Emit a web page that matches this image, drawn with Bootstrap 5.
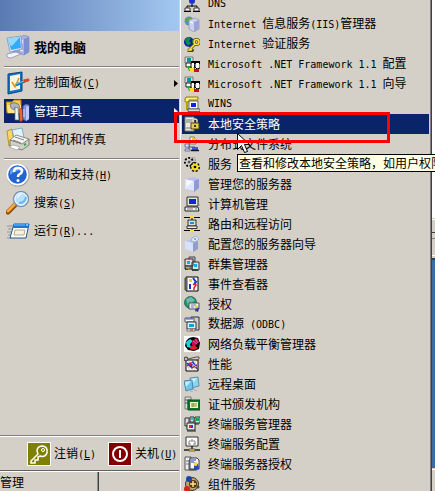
<!DOCTYPE html>
<html lang="zh-CN">
<head>
<meta charset="utf-8">
<meta name="viewport" content="width=device-width, initial-scale=1">
<title>开始菜单 - 管理工具</title>
<link href="https://cdn.jsdelivr.net/npm/bootstrap@5.3.0/dist/css/bootstrap.min.css" rel="stylesheet">
<style>
:root { --face: #d4d0c8; --navy: #0a246a; }
body { font: 12px/16px "Noto Sans CJK SC", sans-serif; color: #000; background: var(--face); }
a, a:hover { color: inherit; text-decoration: none; white-space: nowrap; }
.latin { font: 10px/16px "DejaVu Sans Mono", monospace; white-space: pre; }
svg { display: block; flex: none; }
.start-pane { flex: 0 0 179px; }
.start-banner { height: 31px; background: linear-gradient(90deg, #5a7ab4, #a3c8f0); }
.start-item { height: 24px; padding-left: 2px; gap: 4px; margin: 0 0 4px 4px; }
.start-item svg { width: 24px; height: 24px; }
.start-item .arrow { width: 4px; height: 7px; margin: 0 1px 0 auto; }
.start-item.my-pc { font-size: 13px; font-weight: 700; margin: 4px 0 7px 4px; }
.picked, .picked:hover { background: var(--navy); color: #fff; }
.groove { height: 2px; margin: 3px 0 3px 4px; background: linear-gradient(#808080 50%, #fff 50%); }
.groove.first, .groove.full { margin-top: 0; }
.groove.full { margin-left: 0; margin-bottom: 0; }
.start-foot { height: 33px; gap: 12px; padding-left: 27px; }
.foot-btn { gap: 3px; font-size: 12px; line-height: 16px; color: #000; white-space: nowrap; }
.foot-btn svg { width: 24px; height: 24px; }
.taskbar { height: 21px; border-top: 1px solid #606060; box-shadow: inset 0 1px #fff; }
.task { width: 99px; height: 20px; margin-top: 1px; font-size: 12px; line-height: 16px; color: #000; text-align: left; border-right: 1px solid #404040; box-shadow: inset -1px 0 #909090; }
.tools { border-left: 1px solid var(--face); border-right: 1px solid #404040; box-shadow: inset 1px 0 #fff, inset -1px 0 #808080; padding: 0 2px; background: var(--face); }
.tools-list { margin-top: -6px; }
.tool-item { height: 20px; padding-left: 2px; gap: 8px; }
.tool-item svg { width: 16px; height: 16px; }
.desk { flex: 0 0 3px; background: linear-gradient(#fff 218px, #d4d0c8 218px 219px, #fff 219px 220px, #d4d0c8 220px 232px, #404040 232px 233px, #d4d0c8 233px 238px, #808080 238px 239px, #d4d0c8 239px 255px, #fff 255px 256px, #d4d0c8 256px 258px, #404040 258px 260px, #3a6ea5 260px 468px, #d4d0c8 468px 469px, #fff 469px 470px, #d4d0c8 470px); }
.tip { left: 237px; top: 154px; height: 18px; right: -12px; padding: 0 1px; border: 1px solid #000; background: #ffffe1; white-space: nowrap; }
.frame { left: 174px; top: 112px; width: 216px; height: 31px; border: 3px solid #f00; pointer-events: none; }
.pointer { left: 237px; top: 133px; }
</style>
</head>
<body>
<main class="d-flex vh-100 overflow-hidden position-relative">
  <section class="start-pane d-flex flex-column">
    <header class="start-banner"></header>
    <a href="#" class="start-item my-pc d-flex align-items-center">
      <svg viewBox="0 0 24 24"><path d="M14 3l4-3 5 2v15l-5 3-5-2z" fill="#a9b3e2" stroke="#7c87bd" stroke-width=".7"/><path d="M18 4l5-2v15l-5 3z" fill="#7c8ed2"/><path d="M14 5l3 1M14 7l3 1M14 15l3 1" stroke="#fff"/><path d="M1 3l14-2 1 13-12 3z" fill="#e8ecff" stroke="#7782b5" stroke-width=".7"/><path d="M2 4l12-2 1 11-10 2z" fill="#35aaf8"/><path d="M2 4l12-2-8 9-2-1z" fill="#8edcff"/><path d="M7 16l5-1 1 4-5 1z" fill="#8d98c4"/><path d="M1 19l9-2 5 2-10 4q-5 0-4-4" fill="#f1f3ff" stroke="#8790b2" stroke-width=".8"/></svg>
      <span>我的电脑</span></a>
    <div class="groove first"></div>
    <a href="#" class="start-item d-flex align-items-center">
      <svg viewBox="0 0 24 24"><path d="M2 3l14-2v19L2 23z" fill="#1670c4" stroke="#064884"/><path d="M4 5l10-2v15L4 20z" fill="#fff5d9"/><path d="M6 11l3 5 4-9" fill="none" stroke="#dc9420" stroke-width="1.5"/><path d="M10 14l9-4" stroke="#1672bb" stroke-width="3"/><path d="M18 10l4-1" stroke="#e3421e" stroke-width="3" stroke-linecap="round"/><path d="M10 13l8-3" stroke="#75cafa"/></svg>
      <span>控制面板<span class="latin">(<u>C</u>)</span></span><svg class="arrow" viewBox="0 0 4 7"><path d="M0 0l4 3.500-4 3.500z"/></svg></a>
    <a href="#" class="start-item picked d-flex align-items-center">
      <svg viewBox="0 0 24 24"><path d="M0 3h6l2-2h7v13H1z" fill="#f8cc47" stroke="#b77c15"/><path d="M1 6h14v8H2z" fill="#ffe48a"/><path d="M4 5q4-3 8 0l2 3-3 2-2-2-1 3-3-2z" fill="#adb6c0" stroke="#59636d" stroke-width=".7"/><path d="M9 8l3 1 1 12H9z" fill="#e9f3fa" stroke="#5d727e" stroke-width=".7"/><path d="M13 10l3-1 1 12-3 2z" fill="#f0672b" stroke="#9d361a" stroke-width=".7"/><path d="M17 7l3-2 3 1v14l-3 2-3-2z" fill="#8194dd" stroke="#454e91" stroke-width=".7"/><path d="M20 8l3-1v13l-3 2z" fill="#bec9fa"/><path d="M18 10v8" stroke="#dce3ff"/></svg>
      <span>管理工具</span><svg class="arrow" viewBox="0 0 4 7"><path d="M0 0l4 3.500-4 3.500z" fill="#fff"/></svg></a>
    <a href="#" class="start-item d-flex align-items-center">
      <svg viewBox="0 0 24 24"><path d="M1 4l5-2 2 13-5 4z" fill="#f9d66d" stroke="#b99228"/><path d="M6 3l10-2 2 10-9 3z" fill="#e0f4ff" stroke="#6f9cc1" stroke-width=".8"/><path d="M4 13l6-5 13 4-5 7z" fill="#f5f5f1" stroke="#777" stroke-width=".8"/><path d="M4 13v6l12 4 7-5v-6l-7 5z" fill="#d1d1ca" stroke="#686862" stroke-width=".8"/><path d="M9 10l9 3M7 13l8 3" stroke="#878780"/><path d="M7 18l7 2-3 3-8-3z" fill="#fff" stroke="#999" stroke-width=".7"/><path d="M18 18l2-1" stroke="#32a443" stroke-width="2"/></svg>
      <span>打印机和传真</span></a>
    <div class="groove"></div>
    <a href="#" class="start-item d-flex align-items-center">
      <svg viewBox="0 0 24 24"><circle cx="12" cy="12" r="11.500" fill="#9b9da3"/><circle cx="11.500" cy="11.500" r="11" fill="#fff"/><circle cx="11.500" cy="11.500" r="9.300" fill="#2464d2"/><path d="M4 8q7-9 15 0-8-2-15 4z" fill="#5f9df2"/><path d="M8 9q0-4 4-4t4 3q0 2-3 3.500-1 .5-1 2.500" fill="none" stroke="#fff" stroke-width="2.500"/><circle cx="12" cy="17.500" r="1.500" fill="#fff"/></svg>
      <span>帮助和支持<span class="latin">(<u>H</u>)</span></span></a>
    <a href="#" class="start-item d-flex align-items-center">
      <svg viewBox="0 0 24 24"><path d="M2 21l8-8" stroke="#924909" stroke-width="5" stroke-linecap="round"/><path d="M2 20l8-8" stroke="#f8a83c" stroke-width="3" stroke-linecap="round"/><circle cx="15" cy="8" r="7.400" fill="#a9d7fb" stroke="#7891b1" stroke-width="1.500"/><circle cx="15" cy="8" r="6.200" fill="#b9e2ff" stroke="#fff"/><path d="M11 8q0-5 5-5-4 2-5 5" fill="#fff"/><path d="M13 12q6 0 7-6" fill="none" stroke="#6cb5f3" stroke-width="2"/></svg>
      <span>搜索<span class="latin">(<u>S</u>)</span></span></a>
    <a href="#" class="start-item d-flex align-items-center">
      <svg viewBox="0 0 24 24"><path d="M1 7h6M2 10h5M1 13h5M2 16h3M1 19h4" stroke="#8c98a5"/><path d="M8 5h15l-3 14H4z" fill="#fff" stroke="#23558d"/><path d="M8 5h15l-1 4H7z" fill="#1978d4"/><path d="M8 6h11" stroke="#79c0ff"/><path d="M9 11h10l-1 5H8z" fill="#f5f1db" stroke="#b3ac8d"/><path d="M20 6h2" stroke="#fff"/></svg>
      <span>运行<span class="latin">(<u>R</u>)...</span></span></a>
    <div class="flex-grow-1"></div>
    <div class="groove full"></div>
    <div class="start-foot d-flex align-items-center">
      <button type="button" class="foot-btn d-flex align-items-center border-0 bg-transparent p-0">
        <svg viewBox="0 0 24 24"><path d="M0 0h24v24H0z" fill="#fff"/><path d="M1 1h22v22H1z" fill="#808000"/><path d="M11 12L4 19v2h4v-3h3v-3l2-1q5 2 7-3 1-6-4-7-6 0-6 5z" fill="none" stroke="#fff" stroke-width="1.500"/><circle cx="16" cy="8" r="1.500" fill="none" stroke="#fff"/></svg>
        <span>注销<span class="latin">(<u>L</u>)</span></span></button>
      <button type="button" class="foot-btn d-flex align-items-center border-0 bg-transparent p-0">
        <svg viewBox="0 0 24 24"><path d="M0 0h24v24H0z" fill="#fff"/><path d="M1 1h22v22H1z" fill="#800000"/><circle cx="12" cy="12" r="7" fill="none" stroke="#fff" stroke-width="2"/><path d="M12 8v8" stroke="#fff" stroke-width="2"/></svg>
        <span>关机<span class="latin">(<u>U</u>)</span></span></button>
    </div>
    <footer class="taskbar"><button type="button" class="task border-top-0 border-bottom-0 border-start-0 bg-transparent p-0">管理</button></footer>
  </section>

  <nav class="tools flex-grow-1 overflow-hidden" aria-label="管理工具">
    <div class="tools-list">
    <a href="#" class="tool-item d-flex align-items-center"><svg viewBox="0 0 16 16"><circle cx="8" cy="5" r="3" fill="#2030d0"/><path d="M8 8v3M3 12v-2h10v2" fill="none" stroke="#000"/><path d="M1 12h5v3H1zM10 12h5v3h-5z" fill="#fff" stroke="#333"/><path d="M0 15.500h7M9 15.500h7" stroke="#000"/></svg><span class="latin">DNS</span></a>
    <a href="#" class="tool-item d-flex align-items-center"><svg viewBox="0 0 16 16"><circle cx="5" cy="5" r="4.500" fill="#5a8fc4"/><path d="M2 3q4-3 6 0L5 6 2 5z" fill="#5aa84a"/><path d="M5 4l6-2 4 2v9l-5 3-5-3z" fill="#cbd1ef" stroke="#8990bb" stroke-width=".7"/><path d="M10 6l5-2v9l-5 3z" fill="#9ba4d4"/><path d="M6 6l3 1" stroke="#fff"/></svg><span><span class="latin">Internet </span>信息服务<span class="latin">(IIS)</span>管理器</span></a>
    <a href="#" class="tool-item d-flex align-items-center"><svg viewBox="0 0 16 16"><circle cx="5" cy="6" r="5" fill="#0a20a0"/><path d="M1 4l3-3 3 1-2 3 2 2-3 3-2-3zM8 3l2 3-2 1z" fill="#089044"/><g fill="none"><circle cx="12.500" cy="6" r="2.500" stroke="#554b00" stroke-width="3"/><path d="M11 8l-6 6v1h3l1-2" stroke="#554b00" stroke-width="3"/><circle cx="12.500" cy="6" r="2.500" stroke="#ffe43d" stroke-width="1.500"/><path d="M11 8l-6 6h2l1-1" stroke="#ffe43d" stroke-width="1.500"/></g></svg><span><span class="latin">Internet </span>验证服务</span></a>
    <a href="#" class="tool-item d-flex align-items-center"><svg viewBox="0 0 16 16"><path d="M1 1h8v6H1z" fill="#ddd" stroke="#777"/><path d="M3 2h4v4H3z" fill="#00989b"/><path d="M2 7h6v4H2z" fill="#fff" stroke="#222"/><path d="M3 10h3v2h3v3H5z" fill="#27a544"/><path d="M7 7q3-2 4 1l-1 5-3-1z" fill="#fff" stroke="#000"/><path d="M11 7q4-2 5 1v4l-3 1-2-2z" fill="#fff" stroke="#000"/><path d="M7 6h4v2M11 6h5v2" fill="none" stroke="#000" stroke-width="2"/><path d="M5 12h5v3H6z" fill="#ffdf20"/><path d="M10 13h5v3h-5z" fill="#d20b16"/></svg><span><span class="latin">Microsoft .NET Framework 1.1 </span>配置</span></a>
    <a href="#" class="tool-item d-flex align-items-center"><svg viewBox="0 0 16 16"><path d="M1 1h8v6H1z" fill="#ddd" stroke="#777"/><path d="M3 2h4v4H3z" fill="#00989b"/><path d="M2 7h6v4H2z" fill="#fff" stroke="#222"/><path d="M3 10h3v2h3v3H5z" fill="#27a544"/><path d="M7 7q3-2 4 1l-1 5-3-1z" fill="#fff" stroke="#000"/><path d="M11 7q4-2 5 1v4l-3 1-2-2z" fill="#fff" stroke="#000"/><path d="M7 6h4v2M11 6h5v2" fill="none" stroke="#000" stroke-width="2"/><path d="M5 12h5v3H6z" fill="#ffdf20"/><path d="M10 13h5v3h-5z" fill="#d20b16"/></svg><span><span class="latin">Microsoft .NET Framework 1.1 </span>向导</span></a>
    <a href="#" class="tool-item d-flex align-items-center"><svg viewBox="0 0 16 16"><path d="M2 1h12v3H5v2H1V3z" fill="#ffef79" stroke="#8c7c00"/><path d="M3 6v7h3" fill="none" stroke="#b4a000" stroke-width="2"/><path d="M5 5h9v8H5z" fill="#fff" stroke="#666"/><path d="M7 7h5v4H7z" fill="#1222e0"/><path d="M4 13h12v2.500H4z" fill="#ddd" stroke="#333" stroke-width=".7"/></svg><span class="latin">WINS</span></a>
    <a href="#" class="tool-item picked d-flex align-items-center"><svg viewBox="0 0 16 16"><path d="M1 1h9v14H1z" fill="#ece9df" stroke="#777"/><path d="M2 4h7M2 6h7M2 12h7" stroke="#777"/><path d="M9 7V5q0-2 2-2t2 2v2" fill="none" stroke="#e8dea0" stroke-width="1.500"/><path d="M7 7h8v6H7z" fill="#e4cd56" stroke="#514500"/><path d="M11 9v2" stroke="#000" stroke-width="1.500"/></svg><span>本地安全策略</span></a>
    <a href="#" class="tool-item d-flex align-items-center"><svg viewBox="0 0 16 16"><path d="M6 1h4l2 2v5H6z" fill="#fff" stroke="#777"/><path d="M8 2h4v4H8z" fill="#e7c844"/><path d="M5 7v7H2M5 11h6v2" fill="none" stroke="#555"/><path d="M1 8h4v3H1zM1 13h5v2H1z" fill="#dfe4ff" stroke="#3a4b8a" stroke-width=".7"/><path d="M8 11h6v3H8z" fill="#315be0"/><path d="M7 14.500h8" stroke="#112" stroke-width="1.500"/></svg><span>分布式文件系统</span></a>
    <a href="#" class="tool-item d-flex align-items-center"><svg viewBox="0 0 16 16"><circle cx="5" cy="6" r="4" fill="#ddd" stroke="#111" stroke-width="2" stroke-dasharray="2 1.500"/><circle cx="5" cy="6" r="1.500" fill="#555"/><circle cx="9" cy="4" r="2.500" fill="none" stroke="#777" stroke-dasharray="1 1"/><circle cx="11" cy="11" r="4" fill="#ffe52e" stroke="#111" stroke-width="2" stroke-dasharray="2 1.500"/><circle cx="11" cy="11" r="3.500" fill="#f5df25"/><circle cx="11" cy="11" r="1.300"/></svg><span>服务</span></a>
    <a href="#" class="tool-item d-flex align-items-center"><svg viewBox="0 0 16 16"><path d="M1 3l9-2 5 2v9l-5 4-9-3z" fill="#b8bfee"/><path d="M1 3l9 2v10l-9-2z" fill="#dfe5ff"/><path d="M10 5l5-2v9l-5 4z" fill="#8f99d6"/><path d="M2 4l7 1-6 6z" fill="#f7f9ff"/></svg><span>管理您的服务器</span></a>
    <a href="#" class="tool-item d-flex align-items-center"><svg viewBox="0 0 16 16"><path d="M3 1h11v9H3z" fill="#e5e5e5" stroke="#333"/><path d="M5 3h7v5H5z" fill="#1222dd"/><path d="M1 11h13l1 4H1z" fill="#f4f4f4" stroke="#222"/><path d="M3 13h6" stroke="#777"/><path d="M11 13h2" stroke="#23a443"/><path d="M14 3l1 7" stroke="#777"/></svg><span>计算机管理</span></a>
    <a href="#" class="tool-item d-flex align-items-center"><svg viewBox="0 0 16 16"><path d="M0 1.500h16M8 1v3M8 12v3M0 14.500h16" stroke="#000"/><path d="M6 1h4M6 14.500h4" stroke="#ffe422" stroke-width="2"/><path d="M4 4h8v6H4z" fill="#ddd" stroke="#333"/><path d="M6 6h4v2H6z" fill="#00a6a6"/><path d="M3 10h10v2.500H3z" fill="#f0f0f0" stroke="#333"/></svg><span>路由和远程访问</span></a>
    <a href="#" class="tool-item d-flex align-items-center"><svg viewBox="0 0 16 16"><path d="M1 5l8-2 5 2v8l-5 3-8-3z" fill="#b9c3ed"/><path d="M1 5l8 2v9l-8-3z" fill="#d7e1fb"/><path d="M9 7l5-2v8l-5 3z" fill="#929dcc"/><path d="M8 2l4-2 3 3-4 3-4-1z" fill="#dce9f5" stroke="#92a5bf" stroke-width=".7"/><circle cx="11" cy="3" r="1" fill="#52a6d0"/></svg><span>配置您的服务器向导</span></a>
    <a href="#" class="tool-item d-flex align-items-center"><svg viewBox="0 0 16 16"><path d="M5 1h6v5H5z" fill="#bbb" stroke="#444"/><path d="M1 3h8v7H1zM8 6h7v8H8z" fill="#ddd" stroke="#333"/><path d="M3 5h3v3H3zM10 8h3v3h-3z" fill="#0cb2e0"/><path d="M1 10h7v3H1z" fill="#888" stroke="#333"/><path d="M1 13h3M8 14h6" stroke="#000"/><path d="M2 12h3" stroke="#e5df20"/></svg><span>群集管理器</span></a>
    <a href="#" class="tool-item d-flex align-items-center"><svg viewBox="0 0 16 16"><path d="M2 1h12v14H2z" fill="#fff" stroke="#000"/><path d="M0 3h4M0 5h4M0 7h4M0 9h4M0 11h4M0 13h4" stroke="#444"/><path d="M5 3h3v3H5z" fill="#e5d520"/><path d="M9 2l3 4-2 2M6 8v5" fill="none" stroke="#1830d0" stroke-width="2"/><path d="M9 9q3-2 3 0l-2 3v2" fill="none" stroke="#e21b22" stroke-width="1.500"/></svg><span>事件查看器</span></a>
    <a href="#" class="tool-item d-flex align-items-center"><svg viewBox="0 0 16 16"><circle cx="6.500" cy="6.500" r="6" fill="#159a58" stroke="#336a63"/><path d="M2 3l5-2 4 3-3 3-3-1-1 4z" fill="#72b6ae"/><path d="M5 7h10v6H5z" fill="#eeeede" stroke="#4d5368"/><path d="M7 9h5M7 11h3" stroke="#7080c0"/><path d="M12 10l3 2-1 4-2-1-1 1z" fill="#2632a0"/><circle cx="12.500" cy="11" r="1.500" fill="#e9d34e"/></svg><span>授权</span></a>
    <a href="#" class="tool-item d-flex align-items-center"><svg viewBox="0 0 16 16"><path d="M7 1h8v13h-4V8H7z" fill="#ccc" stroke="#333"/><path d="M1 2h9v4H1z" fill="#fff" stroke="#555"/><path d="M2 3h7" stroke="#304ee0"/><path d="M3 6h9v7H3z" fill="#eee" stroke="#333"/><path d="M5 8h5v3H5z" fill="#0ba2dc"/><path d="M3 13h8v2H3z" fill="#fff" stroke="#777"/><path d="M6 14h3" stroke="#e11a20"/></svg><span>数据源<span class="latin"> (ODBC)</span></span></a>
    <a href="#" class="tool-item d-flex align-items-center"><svg viewBox="0 0 16 16"><path d="M0 0h16v16H0z" fill="#fff"/><path d="M2 5l3-3 4-1 5 1 2 5-1 6-5 2-6-1-3-4z" fill="#000"/><path d="M2 6l4-3 3 2-3 3 1 4-4-1z" fill="#18d6dd"/><path d="M8 5l5-3 2 4-4 4-3-1z" fill="#c10858"/><path d="M7 10l3-1 4 3-4 2-4-1z" fill="#e11d25"/><path d="M9 5l4 3M11 3l3 4" stroke="#f083ae" stroke-width=".7"/></svg><span>网络负载平衡管理器</span></a>
    <a href="#" class="tool-item d-flex align-items-center"><svg viewBox="0 0 16 16"><path d="M2 4h12v11H2z" fill="#fff" stroke="#000"/><path d="M5 5v9M8 5v9M11 5v9M3 8h10M3 11h10" stroke="#aaa" stroke-width=".6"/><path d="M3 10l3-3 2 5 5-3" fill="none" stroke="#da2020" stroke-width="1.500"/><path d="M3 7l4 4 2-5 4 7" fill="none" stroke="#2732c2" stroke-width="1.500"/><circle cx="2" cy="3" r="2" fill="#bbb" stroke="#333"/><path d="M4 3l8-2h3v2l-3 2M7 6l7 8" fill="none" stroke="#555"/><path d="M8 7l4 4" stroke="#e4cf28"/></svg><span>性能</span></a>
    <a href="#" class="tool-item d-flex align-items-center"><svg viewBox="0 0 16 16"><path d="M6 2l8-1 1 9-8 2z" fill="#8bd5f4" stroke="#5e8fb5"/><path d="M7 3l6-1-5 6z" fill="#cff3ff"/><path d="M0 5l8-1 1 9-7 2z" fill="#6ec5ea" stroke="#4e87b0"/><path d="M1 6l6-1-5 6z" fill="#c5edff"/><path d="M9 13l4 2M4 14l5 2" stroke="#9eb4c9"/></svg><span>远程桌面</span></a>
    <a href="#" class="tool-item d-flex align-items-center"><svg viewBox="0 0 16 16"><path d="M1 1h6v3H4v9H1z" fill="#ddd" stroke="#777"/><path d="M1 4h4M1 7h3" stroke="#555"/><path d="M4 4h12v10H4z" fill="#0c762d" stroke="#07511d"/><path d="M6 6h8v6H6z" fill="#f5f4c5"/><path d="M7 8h6M7 10h5M9 7v4" stroke="#849043"/><circle cx="12" cy="10" r="1" fill="#e3be1f"/></svg><span>证书颁发机构</span></a>
    <a href="#" class="tool-item d-flex align-items-center"><svg viewBox="0 0 16 16"><path d="M1 2h4v8H1zM6 1h4v5H6zM11 1h5v6h-5z" fill="#ddd" stroke="#333"/><path d="M12 2h3v3h-3z" fill="#12a856"/><path d="M7 2h2v2H7z" fill="#1bcad2"/><path d="M3 7h8v7H3z" fill="#eee" stroke="#222"/><path d="M5 9h2v3H5z" fill="#e52525"/><path d="M7 9h2v3H7z" fill="#2936df"/><path d="M3 15h9M11 8h4" stroke="#222"/></svg><span>终端服务管理器</span></a>
    <a href="#" class="tool-item d-flex align-items-center"><svg viewBox="0 0 16 16"><path d="M2 1h12v9H2z" fill="#fff" stroke="#333"/><path d="M8 3v2M5 8V5h6v3M4 8h3M9 8h3" fill="none" stroke="#888"/><path d="M8 10v3M0 14h16" stroke="#222" stroke-width="1.500"/><path d="M5 13h6v2H5z" fill="#ffe333" stroke="#333" stroke-width=".7"/></svg><span>终端服务配置</span></a>
    <a href="#" class="tool-item d-flex align-items-center"><svg viewBox="0 0 16 16"><path d="M1 1h6v3H5v10H1z" fill="#eee" stroke="#555"/><path d="M2 5h3M2 8h3" stroke="#777"/><path d="M6 2h7l2 2v9H6z" fill="#fff" stroke="#234"/><path d="M7 4h5M7 6h3" stroke="#1938b0"/><path d="M10 6l4 2 1 4-3 3-2-2z" fill="#2949bd"/><circle cx="11.500" cy="8" r="2" fill="#ffd749"/><path d="M5 14h6" stroke="#222"/></svg><span>终端服务器授权</span></a>
    <a href="#" class="tool-item d-flex align-items-center"><svg viewBox="0 0 16 16"><circle cx="8" cy="8" r="6.500" fill="#bda56a" stroke="#333"/><circle cx="5" cy="3" r="3" fill="#1944aa"/><circle cx="3" cy="13" r="3" fill="#d9211b"/><circle cx="9" cy="8" r="4" fill="#5a3313"/><path d="M9 5v6M6 8h6" stroke="#ffe68e" stroke-width="1.500"/><circle cx="14" cy="11" r="1.500" fill="#444"/></svg><span>组件服务</span></a>
    </div>
  </nav>
  <aside class="desk"></aside>

  <div class="tip position-absolute" role="tooltip">查看和修改本地安全策略，如用户权限</div>
  <svg class="pointer position-absolute" width="13" height="21" viewBox="0 0 13 21"><path d="M.5.500v16l4-4 3 7 3-1-3-7h5z" fill="#fff" stroke="#000"/></svg>
  <div class="frame position-absolute"></div>
</main>
<script src="https://cdn.jsdelivr.net/npm/bootstrap@5.3.0/dist/js/bootstrap.bundle.min.js"></script>
</body>
</html>
